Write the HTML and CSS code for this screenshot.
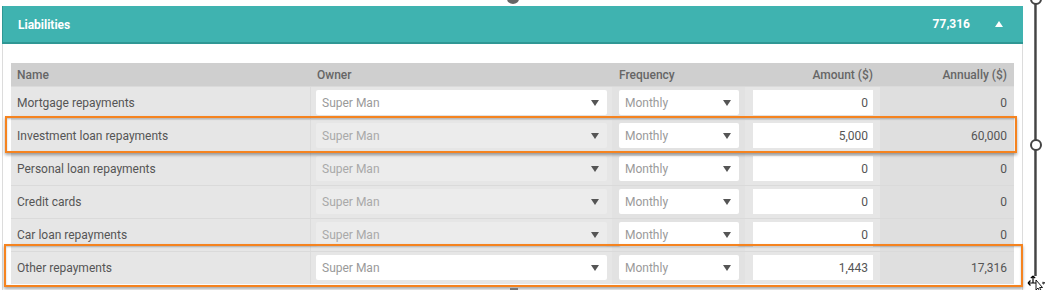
FILE: index.html
```html
<!DOCTYPE html>
<html>
<head>
<meta charset="utf-8">
<link rel="stylesheet" href="styles.css">
</head>
<body>
<div class="stage">
  <div class="panel">
    <div class="panel-head">
      <span class="title">Liabilities</span>
      <span class="head-right"><span class="total">77,316</span><span class="caret"></span></span>
    </div>
    <div class="panel-body">
      <div class="grid">
        <div class="row head">
          <div class="c name">Name</div>
          <div class="c owner">Owner</div>
          <div class="c freq">Frequency</div>
          <div class="c amt">Amount ($)</div>
          <div class="c ann">Annually ($)</div>
        </div>
        <div class="row">
          <div class="c name">Mortgage repayments</div>
          <div class="c owner"><div class="sel">Super Man<i></i></div></div>
          <div class="c freq"><div class="sel">Monthly<i></i></div></div>
          <div class="c amt"><div class="inp">0</div></div>
          <div class="c ann">0</div>
        </div>
        <div class="row">
          <div class="c name">Investment loan repayments</div>
          <div class="c owner"><div class="sel dis">Super Man<i></i></div></div>
          <div class="c freq"><div class="sel">Monthly<i></i></div></div>
          <div class="c amt"><div class="inp">5,000</div></div>
          <div class="c ann">60,000</div>
        </div>
        <div class="row">
          <div class="c name">Personal loan repayments</div>
          <div class="c owner"><div class="sel dis">Super Man<i></i></div></div>
          <div class="c freq"><div class="sel">Monthly<i></i></div></div>
          <div class="c amt"><div class="inp">0</div></div>
          <div class="c ann">0</div>
        </div>
        <div class="row">
          <div class="c name">Credit cards</div>
          <div class="c owner"><div class="sel dis">Super Man<i></i></div></div>
          <div class="c freq"><div class="sel">Monthly<i></i></div></div>
          <div class="c amt"><div class="inp">0</div></div>
          <div class="c ann">0</div>
        </div>
        <div class="row">
          <div class="c name">Car loan repayments</div>
          <div class="c owner"><div class="sel dis">Super Man<i></i></div></div>
          <div class="c freq"><div class="sel">Monthly<i></i></div></div>
          <div class="c amt"><div class="inp">0</div></div>
          <div class="c ann">0</div>
        </div>
        <div class="row">
          <div class="c name">Other repayments</div>
          <div class="c owner"><div class="sel">Super Man<i></i></div></div>
          <div class="c freq"><div class="sel">Monthly<i></i></div></div>
          <div class="c amt"><div class="inp">1,443</div></div>
          <div class="c ann">17,316</div>
        </div>
      </div>
    </div>
  </div>

  <div class="hl hl-1"></div>
  <div class="hl hl-2"></div>

  <div class="handle-top"></div>
  <div class="handle-bottom"></div>
  <div class="vline"></div>
  <div class="vdot vdot-top"></div>
  <div class="vdot vdot-mid"></div>
  <svg class="cursor" width="18" height="16" viewBox="0 0 18 16">
    <path d="M1 8 H9 M1 8 L3.5 5.5 M1 8 L3.5 10.5 M6 1 V8 M6 1 L3.8 3.2 M6 1 L8.2 3.2" fill="none" stroke="#000" stroke-width="1.2"/>
    <path d="M9 5 L9 15 L11 13 L12.5 16 L14 15.3 L12.6 12.5 L15.5 12.5 Z" fill="#fff" stroke="#000" stroke-width="0.9"/>
    <path d="M15 8 H17.5 M16.3 6.8 L17.5 8 L16.3 9.2" fill="none" stroke="#000" stroke-width="1"/>
  </svg>
</div>
</body>
</html>
```

FILE: styles.css
```css
* { box-sizing: border-box; }
html, body { margin: 0; padding: 0; background: #fff; }
body {
  font-family: Roboto, "Liberation Sans", Arial, sans-serif;
  font-size: 12px;
  color: #555;
  width: 1045px;
  height: 290px;
  overflow: hidden;
}
.stage { position: relative; width: 1045px; height: 290px; overflow: hidden; }

.panel {
  margin-left: 2px;
  margin-top: 6px;
  width: 1021px;
  height: 284px;
  border-left: 1px solid #dcdcdc;
  border-right: 1px solid #dcdcdc;
}
.panel-head {
  height: 38px;
  background: #3fb3b0;
  border-bottom: 2px solid #2f9794;
  border-left: 1px solid #2f9794;
  margin-left: -1px;
  margin-right: -1px;
  display: flex;
  align-items: center;
  justify-content: space-between;
  padding: 0 20px 0 15px;
  color: #fff;
  font-weight: 700;
  font-size: 12px;
}
.title { padding-top: 1px; }
.head-right { display: flex; align-items: center; }
.total { margin-right: 25px; }
.caret {
  width: 0; height: 0;
  border-left: 4px solid transparent;
  border-right: 4px solid transparent;
  border-bottom: 6px solid #fff;
}

.panel-body { padding: 19px 0 0 8px; }
.grid { width: 1003px; }
.row {
  display: grid;
  grid-template-columns: 300px 301px 133px 135px 134px;
  height: 33px;
  background: #e6e6e6;
  border-top: 1px solid #dadada;
}
.row.head {
  height: 23px;
  background: #cfcfcf;
  border-top: 0;
  font-weight: 500;
  font-size: 12px;
  color: #666;
}
.c { display: flex; align-items: center; white-space: nowrap; padding-bottom: 1px; }
.head .c { padding-bottom: 0; }
.name { padding-left: 6px; border-right: 1px solid #dcdcdc; }
.head .name { border-right: 0; }
.owner { padding-left: 5px; padding-right: 5px; }
.freq { padding-left: 7px; padding-right: 6px; background: #e2e2e2; }
.head .freq { background: transparent; }
.amt { padding-left: 8px; padding-right: 7px; justify-content: flex-end; }
.ann { padding-right: 7px; justify-content: flex-end; background: #dfdfdf; }
.head .ann { background: transparent; }
.head .owner { padding-left: 6px; }
.head .freq { padding-left: 7px; }

.sel {
  position: relative;
  width: 100%;
  height: 25px;
  background: #fff;
  color: #9a9a9a;
  padding-left: 6px;
  display: flex;
  align-items: center;
  border-radius: 2px;
}
.sel.dis { background: #ececec; color: #a9a9a9; }
.sel i {
  position: absolute;
  right: 8px;
  top: 10px;
  width: 0; height: 0;
  border-left: 4px solid transparent;
  border-right: 4px solid transparent;
  border-top: 6px solid #555;
}
.inp {
  width: 100%;
  height: 25px;
  background: #fff;
  display: flex;
  align-items: center;
  justify-content: flex-end;
  padding-right: 5px;
  color: #555;
}

.hl {
  position: absolute;
  border: 2px solid #f5831f;
  box-shadow: 0 2px 3px rgba(0,0,0,0.35), inset 0 1px 2px rgba(0,0,0,0.25);
}
.hl-1 { left: 5px; top: 116px; width: 1012px; height: 37px; }
.hl-2 { left: 4px; top: 244px; width: 1019px; height: 43px; }

.handle-top {
  position: absolute;
  left: 507px; top: -6px;
  width: 12px; height: 10px;
  border-radius: 50%;
  background: #666;
}
.handle-bottom {
  position: absolute;
  left: 510px; top: 288px;
  width: 8px; height: 4px;
  background: #777;
}
.vline {
  position: absolute;
  left: 1034px; top: 0;
  width: 3px; height: 276px;
  background: linear-gradient(to right, #888, #444, #999);
}
.vdot {
  position: absolute;
  width: 12px; height: 12px;
  border-radius: 50%;
  background: #fff;
  border: 2px solid #444;
}
.vdot-top { left: 1030px; top: -7px; }
.vdot-mid { left: 1030px; top: 139px; }
.cursor { position: absolute; left: 1027px; top: 275px; }
```
